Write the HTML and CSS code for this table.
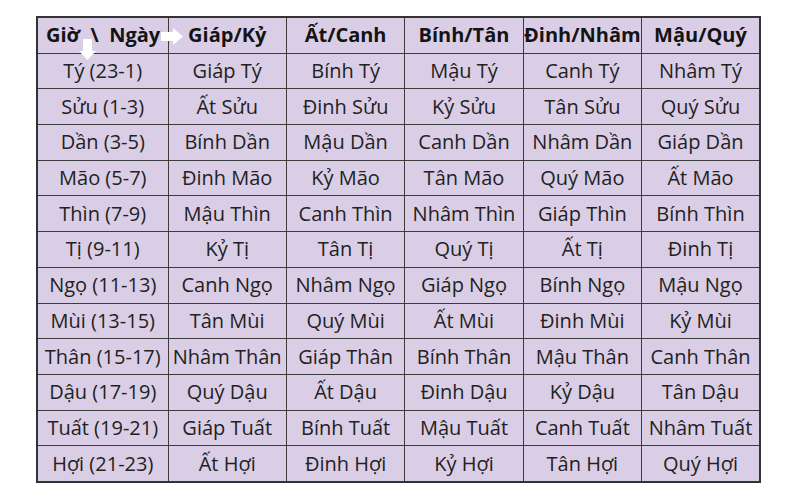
FILE: index.html
```html
<!DOCTYPE html>
<html lang="vi">
<head>
<meta charset="utf-8">
<link rel="stylesheet" href="styles.css">
</head>
<body>
<div class="wrap">
  <table class="can-chi">
    <colgroup>
      <col class="c-first">
      <col class="c-day"><col class="c-day"><col class="c-day"><col class="c-day"><col class="c-day">
    </colgroup>
    <thead>
      <tr>
        <th class="corner">Giờ &nbsp;\ &nbsp;Ngày</th>
        <th>Giáp/Kỷ</th>
        <th>Ất/Canh</th>
        <th>Bính/Tân</th>
        <th>Đinh/Nhâm</th>
        <th>Mậu/Quý</th>
      </tr>
    </thead>
    <tbody>
      <tr><td>Tý (23-1)</td><td>Giáp Tý</td><td>Bính Tý</td><td>Mậu Tý</td><td>Canh Tý</td><td>Nhâm Tý</td></tr>
      <tr><td>Sửu (1-3)</td><td>Ất Sửu</td><td>Đinh Sửu</td><td>Kỷ Sửu</td><td>Tân Sửu</td><td>Quý Sửu</td></tr>
      <tr><td>Dần (3-5)</td><td>Bính Dần</td><td>Mậu Dần</td><td>Canh Dần</td><td>Nhâm Dần</td><td>Giáp Dần</td></tr>
      <tr><td>Mão (5-7)</td><td>Đinh Mão</td><td>Kỷ Mão</td><td>Tân Mão</td><td>Quý Mão</td><td>Ất Mão</td></tr>
      <tr><td>Thìn (7-9)</td><td>Mậu Thìn</td><td>Canh Thìn</td><td>Nhâm Thìn</td><td>Giáp Thìn</td><td>Bính Thìn</td></tr>
      <tr><td>Tị (9-11)</td><td>Kỷ Tị</td><td>Tân Tị</td><td>Quý Tị</td><td>Ất Tị</td><td>Đinh Tị</td></tr>
      <tr><td>Ngọ (11-13)</td><td>Canh Ngọ</td><td>Nhâm Ngọ</td><td>Giáp Ngọ</td><td>Bính Ngọ</td><td>Mậu Ngọ</td></tr>
      <tr><td>Mùi (13-15)</td><td>Tân Mùi</td><td>Quý Mùi</td><td>Ất Mùi</td><td>Đinh Mùi</td><td>Kỷ Mùi</td></tr>
      <tr><td>Thân (15-17)</td><td>Nhâm Thân</td><td>Giáp Thân</td><td>Bính Thân</td><td>Mậu Thân</td><td>Canh Thân</td></tr>
      <tr><td>Dậu (17-19)</td><td>Quý Dậu</td><td>Ất Dậu</td><td>Đinh Dậu</td><td>Kỷ Dậu</td><td>Tân Dậu</td></tr>
      <tr><td>Tuất (19-21)</td><td>Giáp Tuất</td><td>Bính Tuất</td><td>Mậu Tuất</td><td>Canh Tuất</td><td>Nhâm Tuất</td></tr>
      <tr><td>Hợi (21-23)</td><td>Ất Hợi</td><td>Đinh Hợi</td><td>Kỷ Hợi</td><td>Tân Hợi</td><td>Quý Hợi</td></tr>
    </tbody>
  </table>
  <svg class="arrow arrow-right" width="24" height="18" viewBox="0 0 24 18">
    <path d="M0 4 H12 V0 L22 8.5 L12 17 V13 H0 Z" fill="#ffffff"/>
  </svg>
  <svg class="arrow arrow-down" width="18" height="22" viewBox="0 0 18 22">
    <path d="M4 0 H13 V12 H17 L8.5 21 L0 12 H4 Z" fill="#ffffff"/>
  </svg>
</div>
</body>
</html>
```

FILE: styles.css
```css
html, body {
  margin: 0;
  padding: 0;
  background: #ffffff;
}

.wrap {
  position: relative;
  padding: 16px 0 0 36px;
}

.can-chi {
  border-collapse: collapse;
  table-layout: fixed;
  width: 723px;
  font-family: "Open Sans", "Noto Sans", sans-serif;
  font-size: 20px;
  color: #222222;
  background: #dacee6;
  border: 2px solid #333333;
}

.c-first { width: 131px; }
.c-day { width: 118.4px; }

.can-chi th,
.can-chi td {
  border: 1px solid #3c3c3c;
  text-align: center;
  vertical-align: middle;
  padding: 0;
  white-space: nowrap;
  height: 34.7px;
  line-height: 26px;
}

.can-chi th {
  font-weight: 700;
  color: #141414;
}

.can-chi th.corner {
  text-align: left;
  padding-left: 8px;
}

.arrow {
  position: absolute;
  display: block;
}

.arrow-right {
  left: 161px;
  top: 28px;
}

.arrow-down {
  left: 79px;
  top: 39px;
}
```
